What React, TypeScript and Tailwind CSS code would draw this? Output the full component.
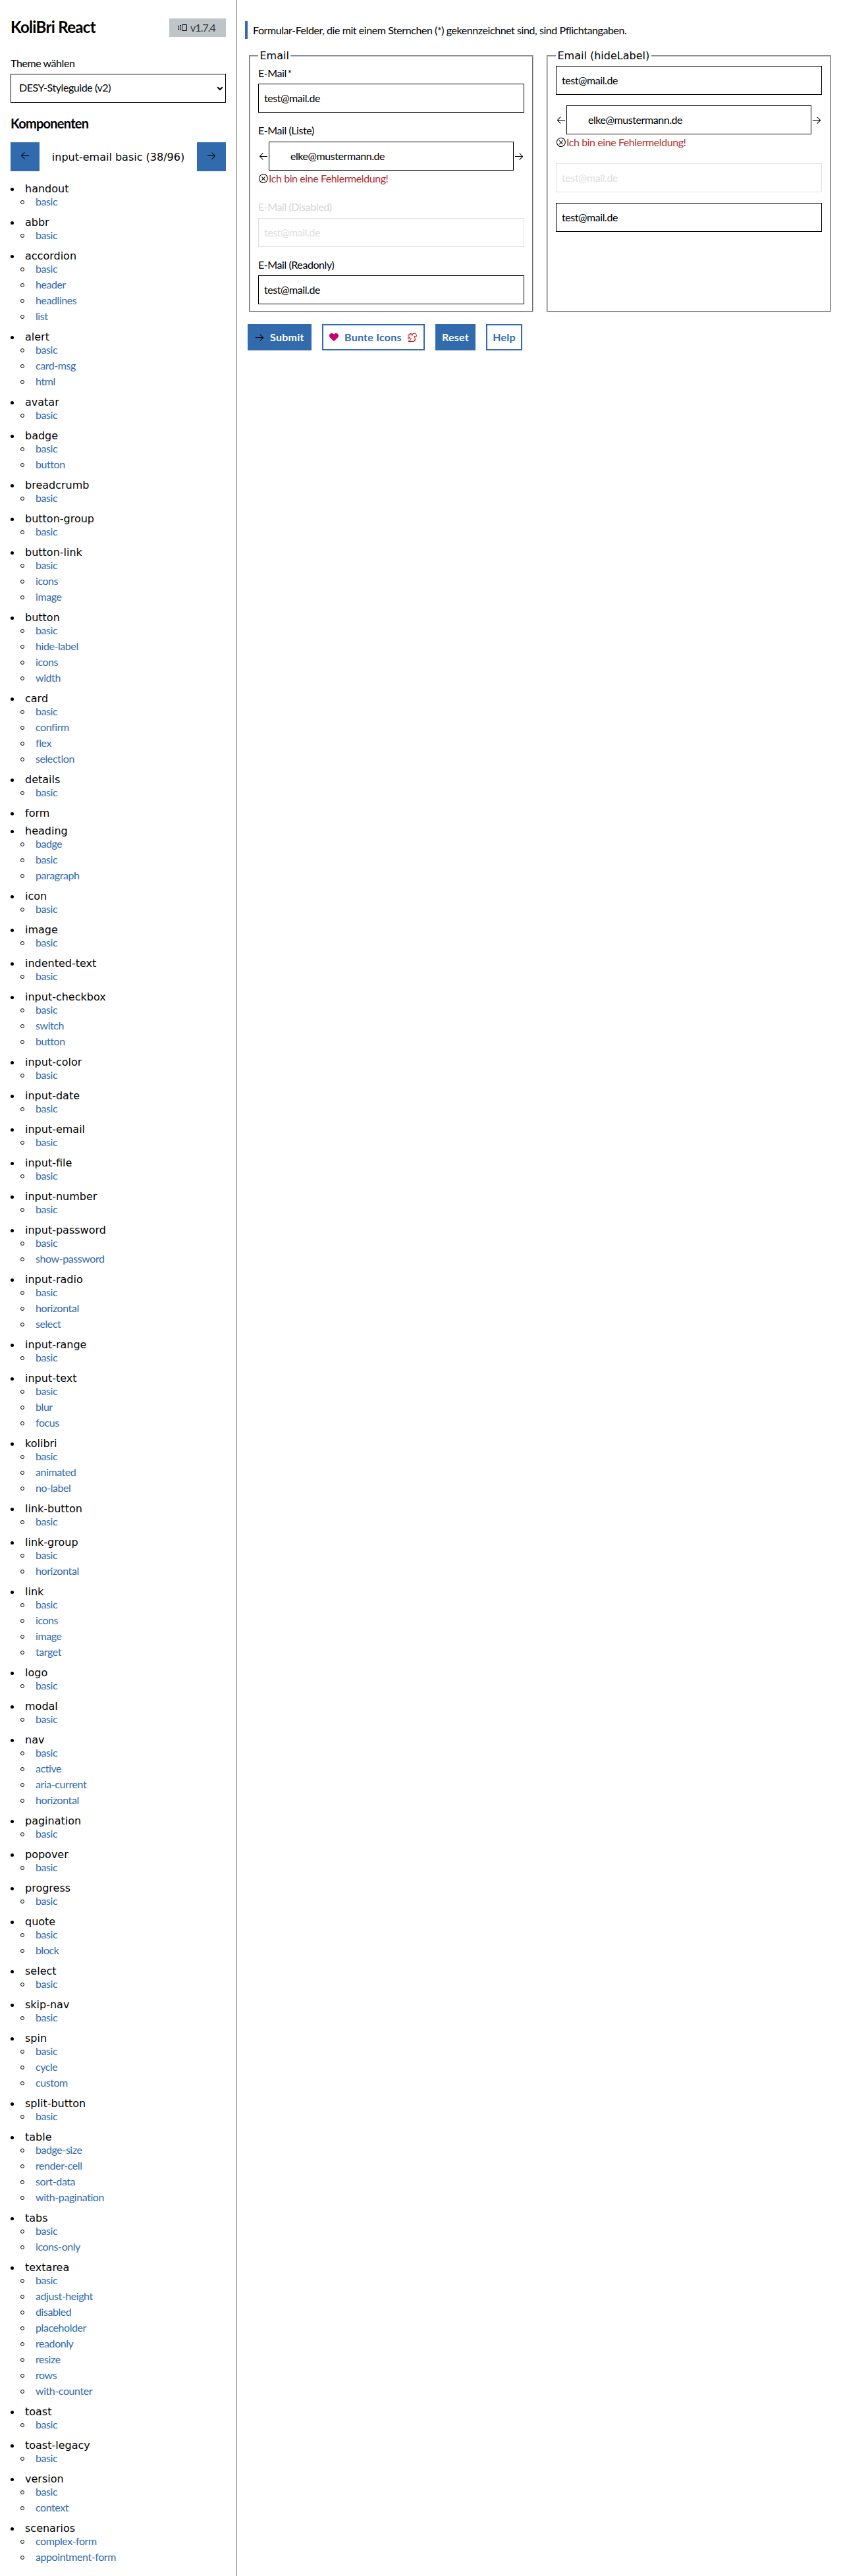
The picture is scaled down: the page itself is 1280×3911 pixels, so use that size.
import type { ReactNode } from 'react';
import {
  VscArrowLeft,
  VscArrowRight,
  VscError,
  VscHeartFilled,
  VscSquirrel,
  VscVersions,
} from 'react-icons/vsc';

const components: [string, string[]][] = [
  ['handout', ['basic']],
  ['abbr', ['basic']],
  ['accordion', ['basic', 'header', 'headlines', 'list']],
  ['alert', ['basic', 'card-msg', 'html']],
  ['avatar', ['basic']],
  ['badge', ['basic', 'button']],
  ['breadcrumb', ['basic']],
  ['button-group', ['basic']],
  ['button-link', ['basic', 'icons', 'image']],
  ['button', ['basic', 'hide-label', 'icons', 'width']],
  ['card', ['basic', 'confirm', 'flex', 'selection']],
  ['details', ['basic']],
  ['form', []],
  ['heading', ['badge', 'basic', 'paragraph']],
  ['icon', ['basic']],
  ['image', ['basic']],
  ['indented-text', ['basic']],
  ['input-checkbox', ['basic', 'switch', 'button']],
  ['input-color', ['basic']],
  ['input-date', ['basic']],
  ['input-email', ['basic']],
  ['input-file', ['basic']],
  ['input-number', ['basic']],
  ['input-password', ['basic', 'show-password']],
  ['input-radio', ['basic', 'horizontal', 'select']],
  ['input-range', ['basic']],
  ['input-text', ['basic', 'blur', 'focus']],
  ['kolibri', ['basic', 'animated', 'no-label']],
  ['link-button', ['basic']],
  ['link-group', ['basic', 'horizontal']],
  ['link', ['basic', 'icons', 'image', 'target']],
  ['logo', ['basic']],
  ['modal', ['basic']],
  ['nav', ['basic', 'active', 'aria-current', 'horizontal']],
  ['pagination', ['basic']],
  ['popover', ['basic']],
  ['progress', ['basic']],
  ['quote', ['basic', 'block']],
  ['select', ['basic']],
  ['skip-nav', ['basic']],
  ['spin', ['basic', 'cycle', 'custom']],
  ['split-button', ['basic']],
  ['table', ['badge-size', 'render-cell', 'sort-data', 'with-pagination']],
  ['tabs', ['basic', 'icons-only']],
  ['textarea', ['basic', 'adjust-height', 'disabled', 'placeholder', 'readonly', 'resize', 'rows', 'with-counter']],
  ['toast', ['basic']],
  ['toast-legacy', ['basic']],
  ['version', ['basic', 'context']],
  ['scenarios', ['complex-form', 'appointment-form']],
];

function Sidebar() {
  return (
    <aside className="h-[3911px] w-[360px] shrink-0 border-r border-[#808080] px-4">
      <div className="flex h-14 w-[327px] items-end justify-between">
        <h1 className="h-[30px] whitespace-nowrap text-2xl/[30px] font-bold tracking-[-0.68px]">KoliBri React</h1>
        <div className="flex h-7 w-[86px] items-center gap-1 bg-[#bec5c9] pl-3 tracking-[-0.95px] text-[#333]">
          <VscVersions className="size-4 text-black" />
          <span>v1.7.4</span>
        </div>
      </div>
      <label className="mt-7 block h-7 leading-6">Theme wählen</label>
      <div className="flex h-11 w-[327px] items-center justify-between border border-black pl-3 pr-[3px]">
        <span className="pb-0.5">DESY-Styleguide (v2)</span>
        <svg viewBox="0 0 10 10" className="size-[10px] fill-none stroke-black stroke-2">
          <path d="M1.2 3.2 5 7l3.8-3.8" />
        </svg>
      </div>
      <h2 className="mt-[18px] h-[42px] text-xl/[26px] font-bold tracking-[-0.75px]">Komponenten</h2>
      <div className="flex h-11 w-[327px] items-center justify-between font-['DejaVu_Sans',sans-serif] tracking-normal">
        <button className="flex size-11 items-center justify-center bg-[#316bae] pb-1">
          <VscArrowLeft className="size-4" />
        </button>
        <span className="pt-0.5">input-email basic (38/96)</span>
        <button className="flex size-11 items-center justify-center bg-[#316bae] pb-1">
          <VscArrowRight className="size-4" />
        </button>
      </div>
      <ul className="mt-4">
        {components.map(([name, examples]) => (
          <li key={name}>
            <div className="flex h-[18px] items-start font-['DejaVu_Sans',sans-serif] leading-[21px] tracking-normal">
              <span className="mr-[17px] mt-[9px] size-[5px] rounded-full bg-black" />
              {name}
            </div>
            <ul className="mb-[9px]">
              {examples.map((example) => (
                <li key={example} className="flex h-6 items-center pl-[15px]">
                  <span className="mr-[17px] mt-0.5 size-[6px] rounded-full border border-black" />
                  <a className="text-[#316bae]">{example}</a>
                </li>
              ))}
            </ul>
          </li>
        ))}
      </ul>
    </aside>
  );
}

function Group({ title, children }: { title: string; children: ReactNode }) {
  return (
    <fieldset className="h-[401px] w-[432px] border-2 border-[#c0c0c0] px-3 [border-style:groove]">
      <legend className="h-6 px-[2.5px] font-['DejaVu_Sans',sans-serif] leading-6 tracking-normal">{title}</legend>
      <div className="pt-[3px]">{children}</div>
    </fieldset>
  );
}

function Label({ text, className = 'h-7' }: { text: string; className?: string }) {
  return <label className={`block leading-[22px] ${className}`}>{text}</label>;
}

function Field({ disabled = false, last = false }: { disabled?: boolean; last?: boolean }) {
  return (
    <div
      className={`flex h-11 items-center border pl-2 ${last ? '' : 'mb-4'} ${
        disabled ? 'border-[#e0e0e0] text-[#e0e0e0]' : 'border-black'
      }`}
    >
      test@mail.de
    </div>
  );
}

function ErrorField() {
  return (
    <div className="mb-4 h-[72px]">
      <div className="flex h-11 items-center">
        <VscArrowLeft className="size-4 shrink-0" />
        <div className="flex h-11 flex-1 items-center border border-black pl-8">elke@mustermann.de</div>
        <VscArrowRight className="size-4 shrink-0" />
      </div>
      <div className="flex h-6 items-center">
        <VscError className="size-4" />
        <span className="text-[#ac3333]">Ich bin eine Fehlermeldung!</span>
      </div>
    </div>
  );
}

export default function App() {
  return (
    <div className="flex h-[3911px] w-[1280px] overflow-hidden bg-white font-[Lato,sans-serif] text-base tracking-[-0.43px] text-black">
      <Sidebar />
      <main className="flex-1 pl-3 pt-8">
        <p className="h-[27px] w-fit whitespace-nowrap border-l-4 border-[#316bae] pl-2 leading-[27px]">
          Formular-Felder, die mit einem Sternchen (*) gekennzeichnet sind, sind Pflichtangaben.
        </p>
        <div className="ml-1.5 mt-3.5 flex gap-5">
          <Group title="Email">
            <Label text="E-Mail *" className="h-[27px] [word-spacing:-2px]" />
            <Field />
            <Label text="E-Mail (Liste)" />
            <ErrorField />
            <Label text="E-Mail (Disabled)" className="h-7 text-[#d6d6d6]" />
            <Field disabled />
            <Label text="E-Mail (Readonly)" className="h-[27px]" />
            <Field last />
          </Group>
          <Group title="Email (hideLabel)">
            <Field />
            <ErrorField />
            <Field disabled />
            <Field last />
          </Group>
        </div>
        <div className="ml-1 mt-[18px] flex h-10 gap-4 font-bold tracking-[0.25px] text-white">
          <button className="flex w-[97px] items-center gap-2 bg-[#316bae] pl-2.5">
            <VscArrowRight className="size-4 shrink-0 text-black" />
            Submit
          </button>
          <button className="flex w-[156px] items-center gap-2 whitespace-nowrap border-2 border-[#316bae] pl-2 text-[#316bae]">
            <VscHeartFilled className="size-4 shrink-0 text-[#cc006e]" />
            Bunte Icons
            <VscSquirrel className="size-4 shrink-0 text-[#b71c1c]" />
          </button>
          <button className="w-[61px] bg-[#316bae]">Reset</button>
          <button className="w-[55px] border-2 border-[#316bae] text-[#316bae]">Help</button>
        </div>
      </main>
    </div>
  );
}
